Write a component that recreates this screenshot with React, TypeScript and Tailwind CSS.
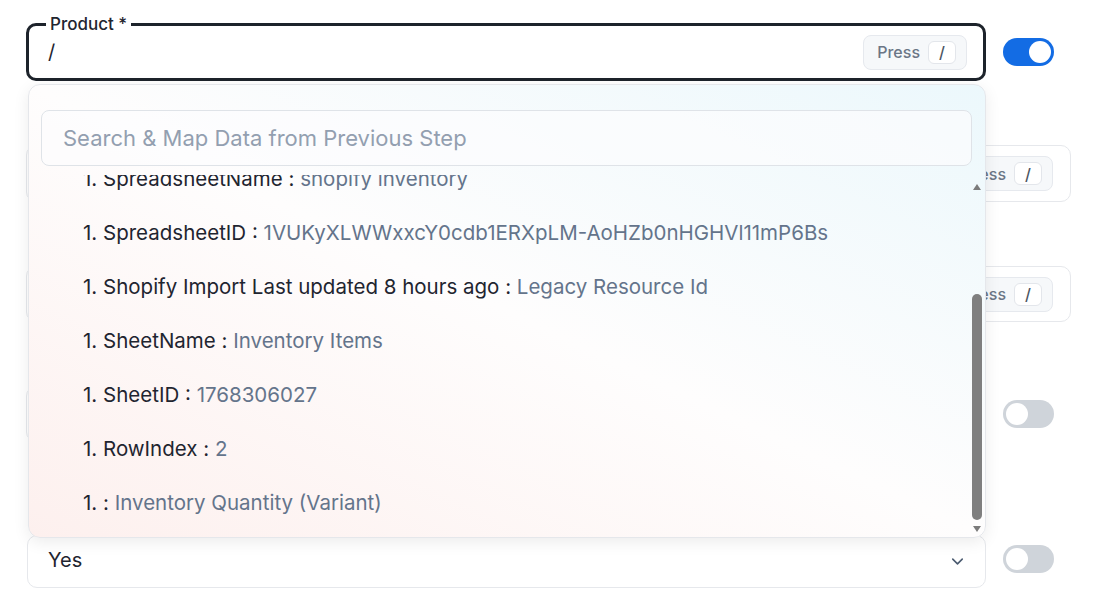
import { ChevronDown } from 'lucide-react';

const items: { key: string; value: string }[] = [
  { key: 'SpreadsheetName', value: 'shopify inventory' },
  { key: 'SpreadsheetID', value: '1VUKyXLWWxxcY0cdb1ERXpLM-AoHZb0nHGHVl11mP6Bs' },
  { key: 'Shopify Import Last updated 8 hours ago', value: 'Legacy Resource Id' },
  { key: 'SheetName', value: 'Inventory Items' },
  { key: 'SheetID', value: '1768306027' },
  { key: 'RowIndex', value: '2' },
  { key: '', value: 'Inventory Quantity (Variant)' },
];

function Toggle({ on, className = '' }: { on: boolean; className?: string }) {
  return (
    <div
      className={`ml-[17px] mr-[51px] flex h-[28px] w-[51px] shrink-0 items-center rounded-full px-[3px] ${
        on ? 'justify-end bg-[#136ce4]' : 'justify-start bg-[#cfd4da]'
      } ${className}`}
    >
      <div className="h-[22px] w-[22px] rounded-full bg-white" />
    </div>
  );
}

function PressKey() {
  return (
    <div className="flex h-[35px] items-center gap-[8px] rounded-[8px] border border-[#e6e9ee] bg-[#f6f8fa] pl-[13px] pr-[10px] text-[16px] font-medium text-[#6b7686]">
      <span>Press</span>
      <span className="flex h-[23px] w-[28px] items-center justify-center rounded-[6px] border border-[#e3e6eb] bg-white text-[16px] text-[#4b5563]">
        /
      </span>
    </div>
  );
}

function Dropdown() {
  return (
    <div className="absolute left-[2px] top-[61px] z-10 flex h-[454px] w-[958px] flex-col overflow-hidden rounded-[12px] border border-[#e5e7eb] bg-linear-to-tr from-[#fdf0ee] via-[#fefdfd] to-[#ecf8fc] pl-[12px] pr-[13px] pt-[25px] shadow-[0_4px_16px_rgba(0,0,0,0.08)]">
      <div className="flex h-[56px] shrink-0 items-center rounded-[8px] border border-[#dfe3e8] bg-[#fcfcfd]/70 px-[21px] text-[22px] text-[#939fb0]">
        Search &amp; Map Data from Previous Step
      </div>
      <div className="relative mr-[-13px] mt-[9px] flex-1 overflow-hidden">
        <div className="mt-[-23px] flex flex-col">
          {items.map((it, i) => (
            <div key={i} className="flex h-[54px] shrink-0 items-center pl-[42px] text-[20.5px] text-[#1f2530]">
              <span className="whitespace-pre">
                1. {it.key}
                {it.key ? ' ' : ''}:{' '}
              </span>
              <span className="text-[#64748b]">{it.value}</span>
            </div>
          ))}
        </div>
        <div className="absolute bottom-0 right-[3px] top-0 w-[10px]">
          <div className="absolute left-[0.5px] top-[9px] h-0 w-0 border-x-[4.5px] border-b-[6px] border-x-transparent border-b-[#7b7b7b]" />
          <div className="absolute left-0 top-[119px] h-[226px] w-[10px] rounded-full bg-[#7f7f7f]" />
          <div className="absolute left-[0.5px] top-[351px] h-0 w-0 border-x-[4.5px] border-t-[6px] border-x-transparent border-t-[#7b7b7b]" />
        </div>
      </div>
    </div>
  );
}

export default function App() {
  return (
    <div
      className="h-[595px] w-[1105px] overflow-hidden bg-white pl-[26px] pt-[23px] text-[#1f2530]"
      style={{ fontFamily: 'Inter, "Noto Sans", sans-serif' }}
    >
      {/* Product row */}
      <div className="relative flex items-center">
        <div className="relative flex h-[58px] flex-1 items-center rounded-[10px] border-[3px] border-[#1d232b] pl-[19px] pr-[16px]">
          <span className="absolute -top-[13px] left-[17px] bg-white px-[4px] text-[17px] font-medium leading-[22px] text-[#1f2530]">
            Product *
          </span>
          <span className="flex-1 text-[20px] text-[#1f2530]">/</span>
          <PressKey />
        </div>
        <Toggle on />
        <Dropdown />
      </div>

      {/* fields behind the menu */}
      <div className="mt-[64px] flex items-center">
        <div className="mr-[34px] flex h-[57px] flex-1 items-center justify-end rounded-[10px] border border-[#e6e8ec] pr-[17px]">
          <PressKey />
        </div>
      </div>
      <div className="mt-[64px] flex items-center">
        <div className="mr-[34px] flex h-[56px] flex-1 items-center justify-end rounded-[10px] border border-[#e6e8ec] pr-[17px]">
          <PressKey />
        </div>
      </div>
      <div className="mt-[64px] flex items-center">
        <div className="flex h-[56px] flex-1 items-center rounded-[10px] border border-[#e6e8ec]" />
        <Toggle on={false} />
      </div>

      {/* Yes row */}
      <div className="mt-[93px] flex items-center">
        <div className="ml-[1px] flex h-[53px] flex-1 items-center justify-between rounded-[10px] border border-[#e6e8ec] pb-[3px] pl-[20px] pr-[18px] text-[20px] text-[#1f2530]">
          <span>Yes</span>
          <ChevronDown size={19} strokeWidth={2} className="mt-[3px] text-[#4b5b70]" />
        </div>
        <Toggle on={false} className="mb-[5px]" />
      </div>
    </div>
  );
}
